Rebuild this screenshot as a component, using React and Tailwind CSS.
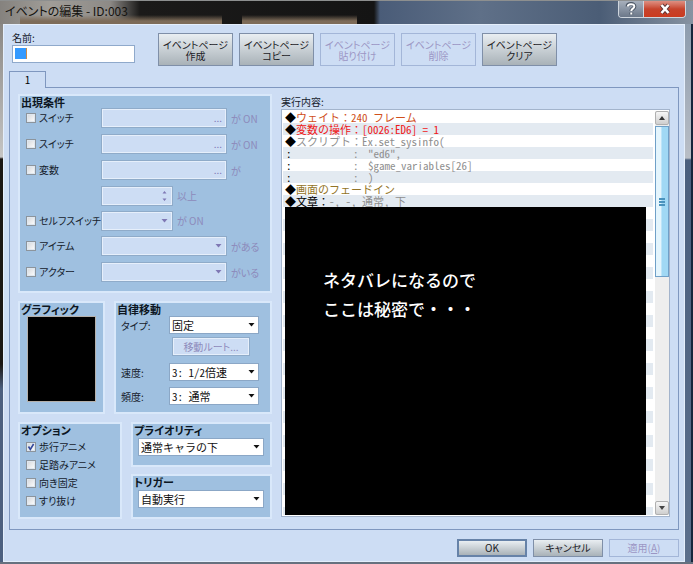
import React from 'react';

const UI = "font-['Noto_Sans_CJK_JP',sans-serif] text-[10px] [font-feature-settings:'palt']";
const MONO = "font-['Noto_Sans_CJK_JP',monospace] text-[11px]";

function PageButton({ lines, disabled }) {
  return (
    <button
      disabled={disabled}
      className={
        'h-[33px] w-[75px] border text-center leading-[11px] ' +
        (disabled
          ? 'border-[#a3b6d8] text-[#9c96c4]'
          : 'border-[#7f8fa8] bg-linear-to-b from-[#e9eef2] to-[#a9b2b8] text-[#1c2126]')
      }
    >
      {lines[0]}
      <br />
      {lines[1]}
    </button>
  );
}

function Panel({ title, className, children }) {
  return (
    <section className={'border-2 border-[#d9e8fa] bg-[#9fc0e0] ' + className}>
      <h2 className="px-px text-[11px] leading-[12px] font-bold text-[#0c1622]">{title}</h2>
      {children}
    </section>
  );
}

function Check({ label, checked }) {
  return (
    <label className="flex items-center gap-[3px] leading-[14px] text-[#15202c]">
      <span className="grid">
        <input
          type="checkbox"
          defaultChecked={checked}
          className="peer col-start-1 row-start-1 size-[10px] appearance-none border border-[#8c949c] bg-linear-to-br from-[#d3d6da] to-white outline outline-[#dfe7ef] -outline-offset-2"
        />
        <svg
          viewBox="0 0 10 10"
          className="pointer-events-none invisible col-start-1 row-start-1 size-[10px] peer-checked:visible"
        >
          <path d="M2.5 4.5 L4.3 7.5 L7.6 2" fill="none" stroke="#33489c" strokeWidth="1.6" />
        </svg>
      </span>
      {label}
    </label>
  );
}

function Combo({ label, value, disabled, halfWidth, className = '' }) {
  return (
    <span className={'grid h-[18px] ' + className}>
      <select
        aria-label={label}
        disabled={disabled}
        className={
          "col-start-1 row-start-1 h-[18px] w-full appearance-none border pl-[2px] leading-[16px] font-['Noto_Sans_CJK_JP',monospace] text-[11px] opacity-100 " +
          (halfWidth ? "[font-feature-settings:'hwid'] " : '[font-feature-settings:normal] ') +
          (disabled ? 'border-[#e6effb] bg-[#cdddf4] outline outline-[#8fabc9]' : 'border-[#8ba7c6] bg-white text-[#111]')
        }
      >
        <option>{value}</option>
      </select>
      <svg
        viewBox="0 0 7 4"
        className="pointer-events-none col-start-1 row-start-1 mr-[4px] h-[4px] w-[7px] self-center justify-self-end"
      >
        <path d="M0.5 0 H6.5 L3.5 3.6 Z" fill={disabled ? '#7f78b4' : '#111'} />
      </svg>
    </span>
  );
}

function Picker({ label }) {
  return (
    <button
      disabled
      aria-label={label}
      className="h-[18px] w-[124px] border border-[#e6effb] bg-[#cdddf4] pr-[3px] text-right leading-[12px] text-[#7f78b4] outline outline-[#8fabc9]"
    >
      ...
    </button>
  );
}

function Condition({ label, suffix, children }) {
  return (
    <div className="flex items-center">
      <div className="w-[76px] shrink-0">{label && <Check label={label} />}</div>
      {children}
      <span className="pl-[5px] text-[#8d8abb]">{suffix}</span>
    </div>
  );
}

function Latin({ children }) {
  return <span className="[font-feature-settings:'hwid']">{children}</span>;
}

function Continued({ children }) {
  return (
    <div className="flex h-[12px] whitespace-pre text-[#8f8f8f]">
      <span className="w-[66px] pl-px text-black">
        <Latin>:</Latin>
      </span>
      <span className="w-[17px] pl-[2px]">
        <Latin>:</Latin>
      </span>
      <Latin>{children}</Latin>
    </div>
  );
}

function Command({ color, children }) {
  return (
    <div className={'h-[12px] whitespace-pre ' + color}>
      <span className="text-black">◆</span>
      {children}
    </div>
  );
}

function TitleBar() {
  return (
    <header className="flex h-[24px] items-start border-t border-[#8d8f8f] [background:linear-gradient(180deg,transparent_14px,#7d6b58_20px)_20px_0/202px_24px_no-repeat,linear-gradient(180deg,transparent_14px,#7d6b58_20px)_242px_0/115px_24px_no-repeat,linear-gradient(90deg,#85827e_0px,#a09d98_50px,#8d8a86_110px,#1b1a19_140px,#141414_374px,#4a5c78_380px,#5f7088_480px,#4b5d76_600px,#8793a2_693px)]">
      <h1 className="grow pl-[5px] text-[12px] leading-[19px] text-[#15130f]">イベントの編集 - ID:003</h1>
      <div className="mr-[7px] flex h-[17px] overflow-hidden rounded-b-[4px] border border-t-0 border-[#cfd6de]">
        <button
          aria-label="ヘルプ"
          className="grid w-[25px] place-items-center border-r border-[#cfd6de] bg-linear-to-b from-[#a7b0bc] via-[#8c97a6] via-45% to-[#6c7889]"
        >
          <svg viewBox="0 0 12 14" className="h-[14px] w-[12px]">
            <path d="M2.5 4.6 C2.5 1 9.5 1 9.5 4.4 C9.5 6.6 6.3 6.6 6.3 9 M6.3 10.6 V12.6" fill="none" stroke="#4d5866" strokeWidth="3.8" />
            <path d="M2.8 4.6 C2.8 1.4 9.3 1.4 9.3 4.4 C9.3 6.6 6.3 6.6 6.3 9 M6.3 10.6 V12.6" fill="none" stroke="#fff" strokeWidth="2" />
          </svg>
        </button>
        <button
          aria-label="閉じる"
          className="grid w-[41px] place-items-center bg-linear-to-b from-[#dd8f82] via-[#c6432c] via-50% to-[#cb3b1f]"
        >
          <svg viewBox="0 0 12 12" className="size-[12px]">
            <path d="M2.5 2 L9.5 10 M9.5 2 L2.5 10" stroke="#5d3535" strokeWidth="4.2" />
            <path d="M2.5 2 L9.5 10 M9.5 2 L2.5 10" stroke="#fff" strokeWidth="2.6" />
          </svg>
        </button>
      </div>
    </header>
  );
}

function ScrollBar() {
  return (
    <div className="flex w-[14px] shrink-0 flex-col bg-[#eeeeee]">
      <button aria-label="上へ" className="grid h-[14px] place-items-center rounded-[2px] border border-[#b0b0b0] bg-linear-to-b from-[#f6f6f6] to-[#cfcfcf]">
        <svg viewBox="0 0 6 4" className="h-[4px] w-[6px]">
          <path d="M0 4 L3 0 L6 4 Z" fill="#333" />
        </svg>
      </button>
      <div className="mt-px grid h-[151px] place-items-center border border-[#6fa0c8] bg-linear-to-r from-[#e4f5fd] from-40% to-[#a0d8f4] to-50%">
        <div className="flex w-[6px] flex-col gap-px">
          <i className="h-[2px] bg-[#4a93bd]" />
          <i className="h-[2px] bg-[#4a93bd]" />
          <i className="h-[2px] bg-[#4a93bd]" />
        </div>
      </div>
      <div className="grow" />
      <button aria-label="下へ" className="grid h-[14px] place-items-center rounded-[2px] border border-[#b0b0b0] bg-linear-to-b from-[#f6f6f6] to-[#cfcfcf]">
        <svg viewBox="0 0 6 4" className="h-[4px] w-[6px]">
          <path d="M0 0 L3 4 L6 0 Z" fill="#444" />
        </svg>
      </button>
    </div>
  );
}

function CommandList() {
  return (
    <div className="flex min-w-0 grow flex-col pt-px pb-[6px]">
      <div className="pb-px leading-[13px] text-[#15202c]">実行内容:</div>
      <div className="flex grow gap-[2px] border border-[#a3b4cc] bg-white p-px pr-0">
        <div
          className={
            MONO +
            " flex min-w-0 grow flex-col bg-[repeating-linear-gradient(180deg,#fff_0px,#fff_12px,#e3eaf1_12px,#e3eaf1_24px)] pl-[2px] leading-[12px] [font-feature-settings:normal]"
          }
        >
          <Command color="text-[#d0501c]">
            ウェイト：<Latin>240 </Latin>フレーム
          </Command>
          <Command color="text-[#f01818]">
            変数の操作：<Latin>[0026:ED6] = 1</Latin>
          </Command>
          <Command color="text-[#8f8f8f]">
            スクリプト：<Latin>Ex.set_sysinfo(</Latin>
          </Command>
          <Continued>"ed6",</Continued>
          <Continued>$game_variables[26]</Continued>
          <Continued>)</Continued>
          <Command color="text-[#937427]">画面のフェードイン</Command>
          <Command color="text-[#8f8f8f]">
            <span className="text-black">文章：</span>
            <Latin>-, -, </Latin>通常<Latin>, </Latin>下
          </Command>
          <div className="mr-[7px] min-h-[300px] grow bg-black pt-[58px] pl-[38px] text-[17px] leading-[29px] font-medium text-white">
            ネタバレになるので
            <br />
            ここは秘密で・・・
          </div>
        </div>
        <ScrollBar />
      </div>
    </div>
  );
}

function Conditions() {
  return (
    <Panel title="出現条件" className="h-[199px]">
      <div className="-mt-[3px] grid grid-rows-[26px_26px_26px_25px_25px_26px_26px] pl-[6px]">
        <Condition label="スイッチ" suffix="が ON"><Picker label="スイッチ1" /></Condition>
        <Condition label="スイッチ" suffix="が ON"><Picker label="スイッチ2" /></Condition>
        <Condition label="変数" suffix="が"><Picker label="変数" /></Condition>
        <Condition suffix="以上">
          <span className="flex h-[18px] w-[70px] items-center border border-[#e6effb] bg-[#cdddf4] outline outline-[#8fabc9]">
            <input aria-label="変数の値" disabled className="min-w-0 grow" />
            <svg viewBox="0 0 5 12" className="mr-[4px] h-[12px] w-[5px] shrink-0">
              <path d="M0.5 3.5 L2.5 1 L4.5 3.5 Z M0.5 8.5 L2.5 11 L4.5 8.5 Z" fill="#7f78b4" />
            </svg>
          </span>
        </Condition>
        <Condition label="セルフスイッチ" suffix="が ON"><Combo disabled label="セルフスイッチ" className="w-[70px]" /></Condition>
        <Condition label="アイテム" suffix="がある"><Combo disabled label="アイテム" className="w-[124px]" /></Condition>
        <Condition label="アクター" suffix="がいる"><Combo disabled label="アクター" className="w-[124px]" /></Condition>
      </div>
    </Panel>
  );
}

function Movement() {
  return (
    <Panel title="自律移動" className="grow">
      <div className="grid grid-cols-[48px_90px] items-center pt-px pl-[5px] text-[#15202c]">
        <span>タイプ:</span>
        <Combo label="タイプ" value="固定" />
        <button disabled className="col-start-2 mt-[4px] mb-[8px] ml-[4px] h-[17px] w-[76px] border border-[#e6effb] bg-[#cdddf4] leading-[13px] text-[#8d8abb] outline outline-[#8fabc9]">
          移動ルート...
        </button>
        <span>速度:</span>
        <Combo halfWidth label="速度" value="3: 1/2倍速" />
        <span className="mt-[6px]">頻度:</span>
        <Combo halfWidth label="頻度" value="3: 通常" className="mt-[6px]" />
      </div>
    </Panel>
  );
}

export default function App() {
  return (
    <div className={UI + ' flex min-h-screen flex-col bg-[#5a6b82]'}>
      <TitleBar />
      <div className="flex grow border-b-2 border-[#66717f] bg-[#16263c]">
        <div className="w-[3px] shrink-0 bg-[linear-gradient(180deg,#8a8783_0px,#c5c5c5_133px,#1a1614_135px,#1a1614_340px,#4c6080_365px,#4c6080_100%)]" />
        <main className="flex grow flex-col border border-[#e4eefb] bg-[#cdddf4] px-[5px] pt-[5px] pb-[4px]">
          <div className="flex items-start pl-[3px]">
            <div className="flex w-[123px] flex-col">
              <label htmlFor="event-name" className="leading-[15px] text-[#15202c]">名前:</label>
              <div className="flex h-[18px] items-start border border-[#8fa9cb] bg-white pt-[2px] pl-[2px]">
                <span className="h-[11px] w-[12px] shrink-0 border-r border-[#c98a4b] bg-[#3399ff]" />
                <input id="event-name" className="h-[13px] min-w-0 grow outline-none" />
              </div>
            </div>
            <div className="flex gap-[6px] pt-[3px] pl-[23px]">
              <PageButton lines={['イベントページ', '作成']} />
              <PageButton lines={['イベントページ', 'コピー']} />
              <PageButton disabled lines={['イベントページ', '貼り付け']} />
              <PageButton disabled lines={['イベントページ', '削除']} />
              <PageButton lines={['イベントページ', 'クリア']} />
            </div>
          </div>
          <button className="z-10 mt-[5px] -mb-px h-[17px] w-[37px] border border-b-0 border-[#7f97bf] bg-[#cdddf4] leading-[16px] text-black">
            1
          </button>
          <div className="flex grow gap-[9px] border border-[#7f97bf] py-[6px] pr-[8px] pl-[8px]">
            <div className="flex w-[254px] shrink-0 flex-col gap-[8px] pb-[3px]">
              <Conditions />
              <div className="flex gap-[9px]">
                <Panel title="グラフィック" className="h-[113px] w-[87px] shrink-0">
                  <div className="mt-px ml-[7px] h-[86px] w-[69px] border border-[#b5b0aa] bg-black" />
                </Panel>
                <Movement />
              </div>
              <div className="flex gap-[9px]">
                <Panel title="オプション" className="w-[104px] shrink-0">
                  <div className="grid auto-rows-[18px] items-center pt-[2px] pl-[6px]">
                    <Check label="歩行アニメ" checked />
                    <Check label="足踏みアニメ" />
                    <Check label="向き固定" />
                    <Check label="すり抜け" />
                  </div>
                </Panel>
                <div className="flex grow flex-col gap-[7px]">
                  <Panel title="プライオリティ" className="h-[45px]">
                    <Combo label="プライオリティ" value="通常キャラの下" className="mt-[2px] ml-[5px] w-[126px]" />
                  </Panel>
                  <Panel title="トリガー" className="h-[45px]">
                    <Combo label="トリガー" value="自動実行" className="mt-[2px] ml-[5px] w-[126px]" />
                  </Panel>
                </div>
              </div>
            </div>
            <CommandList />
          </div>
          <div className="flex justify-end gap-[6px] pt-[9px] leading-[14px]">
            <button className="h-[18px] w-[70px] border-2 border-[#6682a8] bg-linear-to-b from-[#e9eef2] to-[#a9b2b8] text-[#1c2126]">OK</button>
            <button className="h-[18px] w-[70px] border border-[#7f8fa8] bg-linear-to-b from-[#e9eef2] to-[#a9b2b8] text-[#1c2126]">キャンセル</button>
            <button disabled className="h-[18px] w-[70px] border border-[#a3b6d8] text-[#9c96c4]">
              適用(<u>A</u>)
            </button>
          </div>
        </main>
        <div className="mr-[2px] w-[6px] shrink-0 bg-[linear-gradient(180deg,#8d9cae_0px,#b9bec6_134px,#4a5f7e_136px,#5b6f8c_100%)]" />
      </div>
    </div>
  );
}
